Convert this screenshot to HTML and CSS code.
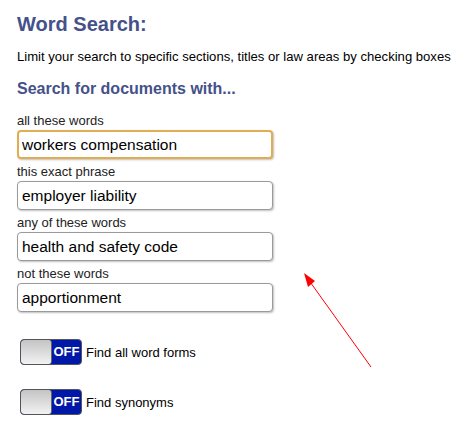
FILE: index.html
```html
<!DOCTYPE html>
<html lang="en">
<head>
    <meta charset="UTF-8">
    <title>Word Search</title>
    <link rel="stylesheet" href="styles.css">
</head>
<body>
    <div class="search-panel">
        <h1>Word Search:</h1>
        <p class="hint">Limit your search to specific sections, titles or law areas by checking boxes</p>
        <h2>Search for documents with...</h2>

        <div class="field">
            <label for="allWords">all these words</label>
            <input type="text" id="allWords" class="focused" value="workers compensation">
        </div>
        <div class="field">
            <label for="phrase">this exact phrase</label>
            <input type="text" id="phrase" value="employer liability">
        </div>
        <div class="field">
            <label for="anyWords">any of these words</label>
            <input type="text" id="anyWords" value="health and safety code">
        </div>
        <div class="field">
            <label for="notWords">not these words</label>
            <input type="text" id="notWords" value="apportionment">
        </div>

        <div class="option">
            <span class="toggle"><span class="knob"></span><span class="state">OFF</span></span>
            Find all word forms
        </div>
        <div class="option">
            <span class="toggle"><span class="knob"></span><span class="state">OFF</span></span>
            Find synonyms
        </div>

        <svg class="arrow" width="455" height="431" viewBox="0 0 455 431">
            <line x1="371" y1="367" x2="308" y2="279" stroke="#ff0000" stroke-width="1"/>
            <polygon points="304,273 315,281 308,287" fill="#ff0000"/>
        </svg>
    </div>
</body>
</html>
```

FILE: styles.css
```css
body {
    margin: 0;
    font-family: "Liberation Sans", Arial, sans-serif;
    background: #fff;
    color: #000;
}

.search-panel {
    padding: 12px 0 0 17px;
}

h1 {
    margin: 0;
    font-size: 20px;
    line-height: 24px;
    color: #45518a;
}

.hint {
    margin: 14px 0 0;
    font-size: 13.1px;
    line-height: 14px;
    white-space: nowrap;
}

h2 {
    margin: 15px 0 0;
    font-size: 16px;
    line-height: 20px;
    color: #45518a;
}

.field {
    margin-top: 5px;
    width: 256px;
}

.field:first-of-type {
    margin-top: 14px;
}

label {
    display: block;
    font-size: 13px;
    line-height: 15px;
    color: #222;
}

input[type="text"] {
    display: block;
    box-sizing: border-box;
    width: 256px;
    height: 29px;
    margin-top: 2px;
    padding: 0 4px;
    font-family: "Liberation Sans", Arial, sans-serif;
    font-size: 15.5px;
    color: #000;
    border: 1px solid #9a9a9a;
    border-radius: 4px;
    box-shadow: 1px 1px 2px rgba(0, 0, 0, 0.25);
    outline: none;
}

input.focused {
    border: 2px solid #e2ac52;
    padding: 0 3px;
}

.option {
    display: flex;
    align-items: center;
    gap: 4px;
    font-size: 13px;
    margin: 27px 0 0 3px;
}

.option + .option {
    margin-top: 24px;
}

.toggle {
    display: flex;
    box-sizing: border-box;
    width: 62px;
    height: 26px;
    border: 1px solid #555;
    border-radius: 4px;
    overflow: hidden;
    background: #0018a8;
}

.knob {
    width: 30px;
    background: linear-gradient(#c4c4c4, #f2f2f2);
    border-right: 1px solid #666;
    border-radius: 3px;
}

.state {
    flex: 1;
    color: #fff;
    font-weight: bold;
    font-size: 13px;
    line-height: 24px;
    text-align: center;
}

.arrow {
    position: absolute;
    left: 0;
    top: 0;
    pointer-events: none;
}
```
